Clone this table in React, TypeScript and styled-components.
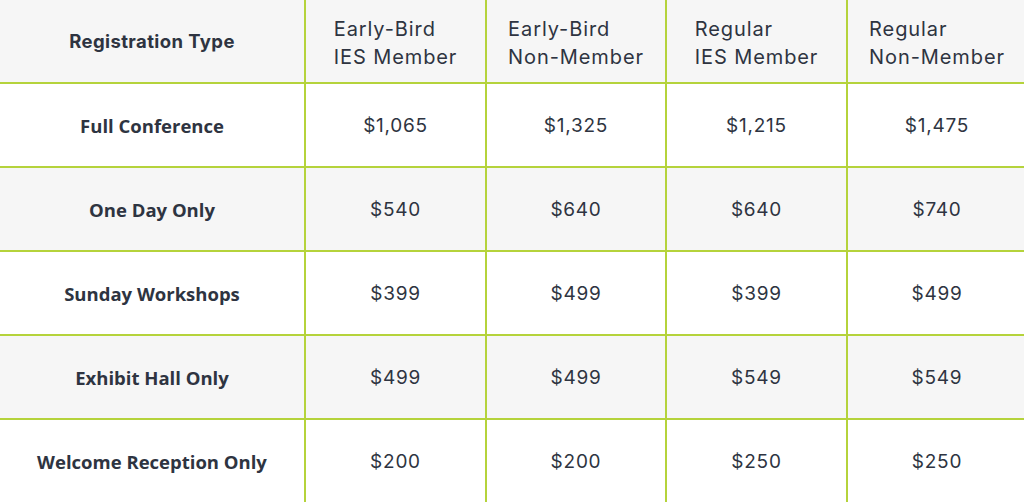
import React from "react";
import styled, { createGlobalStyle } from "styled-components";

const Global = createGlobalStyle`
  html, body { margin: 0; padding: 0; background: #ffffff; }
  body { overflow: hidden; }
`;

const Grid = styled.div`
  display: grid;
  grid-template-columns: 304px 179px 178px 179px 178px;
  grid-auto-rows: 82px;
  gap: 2px;
  background: #b5d33b;
  width: 1026px;
  height: 502px;
  overflow: hidden;
`;

const Cell = styled.div<{ $shade: boolean }>`
  display: flex;
  align-items: center;
  justify-content: center;
  background: ${(p) => (p.$shade ? "#f6f6f6" : "#ffffff")};
  color: #2e3441;
`;

const HeadLabel = styled.div`
  font-family: "Inter", "Liberation Sans", sans-serif;
  font-weight: 700;
  font-size: 18.5px;
  letter-spacing: 0.4px;
`;

const HeadStack = styled.div`
  font-family: "Inter", "Liberation Sans", sans-serif;
  font-weight: 400;
  font-size: 20px;
  line-height: 28.5px;
  text-align: left;
  letter-spacing: 0.9px;
  margin-top: 4px;
`;

const TypeLabel = styled.div`
  font-family: "Open Sans", "Liberation Sans", sans-serif;
  font-weight: 700;
  font-size: 18.5px;
`;

const Price = styled.div`
  font-family: "Inter", "Liberation Sans", sans-serif;
  font-weight: 400;
  font-size: 19px;
  letter-spacing: 0.75px;
`;

const headers: [string, string][] = [
  ["Early-Bird", "IES Member"],
  ["Early-Bird", "Non-Member"],
  ["Regular", "IES Member"],
  ["Regular", "Non-Member"],
];

const rows: [string, string[]][] = [
  ["Full Conference", ["$1,065", "$1,325", "$1,215", "$1,475"]],
  ["One Day Only", ["$540", "$640", "$640", "$740"]],
  ["Sunday Workshops", ["$399", "$499", "$399", "$499"]],
  ["Exhibit Hall Only", ["$499", "$499", "$549", "$549"]],
  ["Welcome Reception Only", ["$200", "$200", "$250", "$250"]],
];

export default function App() {
  return (
    <>
      <Global />
      <Grid>
        <Cell $shade>
          <HeadLabel>Registration Type</HeadLabel>
        </Cell>
        {headers.map(([a, b], i) => (
          <Cell $shade key={i}>
            <HeadStack>
              {a}
              <br />
              {b}
            </HeadStack>
          </Cell>
        ))}
        {rows.map(([label, prices], r) => (
          <React.Fragment key={label}>
            <Cell $shade={r % 2 === 1}>
              <TypeLabel>{label}</TypeLabel>
            </Cell>
            {prices.map((p, c) => (
              <Cell $shade={r % 2 === 1} key={c}>
                <Price>{p}</Price>
              </Cell>
            ))}
          </React.Fragment>
        ))}
      </Grid>
    </>
  );
}
